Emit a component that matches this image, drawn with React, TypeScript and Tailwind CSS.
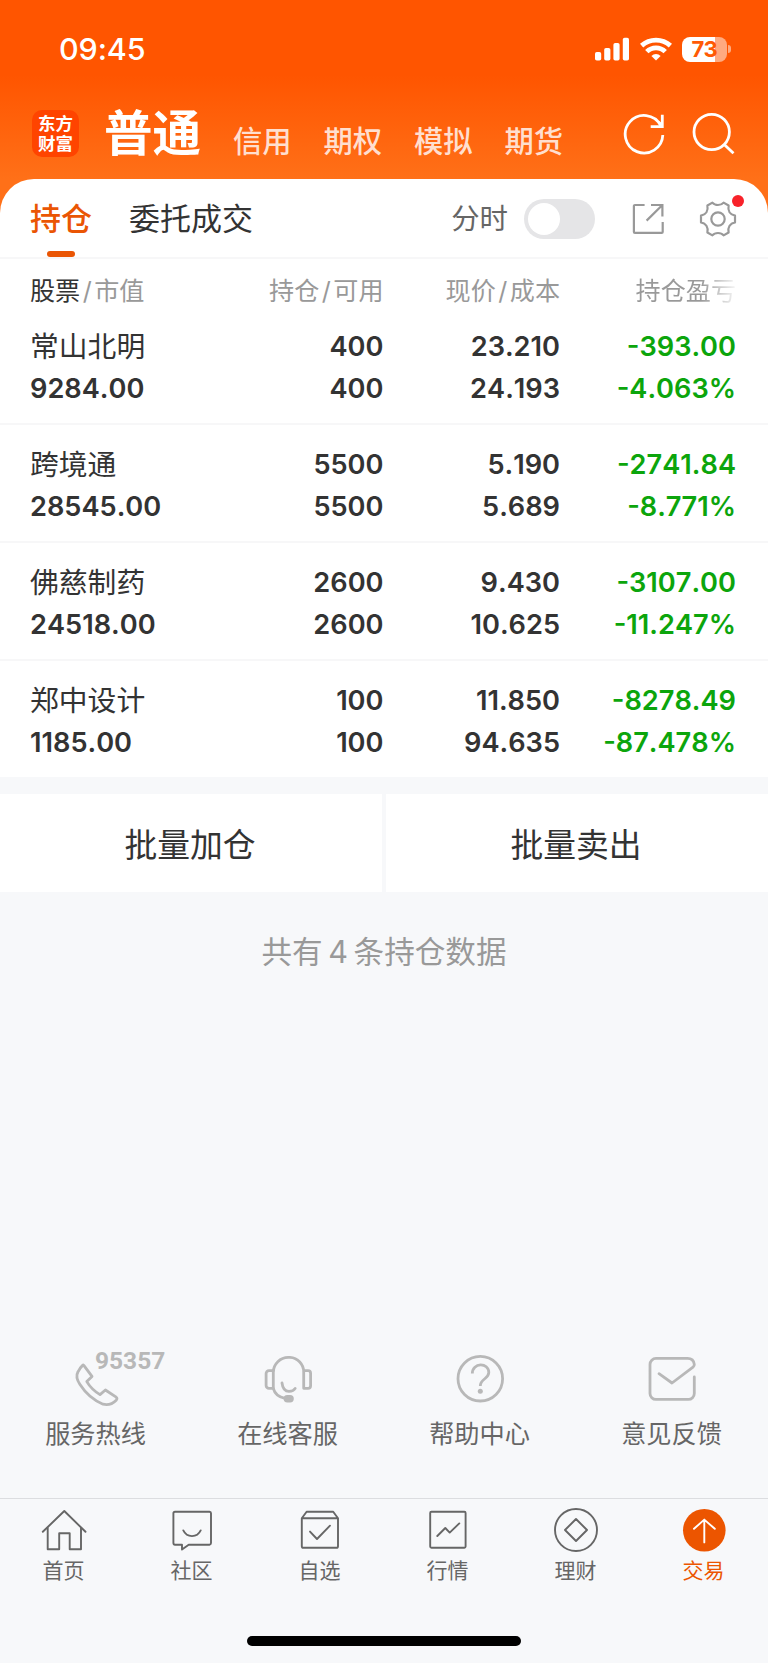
import type { ReactNode } from "react";

type Holding = {
  name: string;
  value: string;
  amount: string;
  available: string;
  price: string;
  cost: string;
  profit: string;
  ratio: string;
};

const holdings: Holding[] = [
  { name: "常山北明", value: "9284.00", amount: "400", available: "400", price: "23.210", cost: "24.193", profit: "-393.00", ratio: "-4.063%" },
  { name: "跨境通", value: "28545.00", amount: "5500", available: "5500", price: "5.190", cost: "5.689", profit: "-2741.84", ratio: "-8.771%" },
  { name: "佛慈制药", value: "24518.00", amount: "2600", available: "2600", price: "9.430", cost: "10.625", profit: "-3107.00", ratio: "-11.247%" },
  { name: "郑中设计", value: "1185.00", amount: "100", available: "100", price: "11.850", cost: "94.635", profit: "-8278.49", ratio: "-87.478%" },
];

const accounts = ["信用", "期权", "模拟", "期货"];

const services: { label: string; icon: ReactNode }[] = [
  {
    label: "服务热线",
    icon: (
      <path d="M11.8 10.4 20 21.4 14.8 26.6Q19.5 34.5 28 39.6L33.4 35 44.2 42.2Q45.6 43.4 44.2 45.2 38.5 51 31 49.2 17 43.6 8 29.6 3 22 6 16.8 8.2 12.6 10.6 10.4 11.2 9.8 11.8 10.4Z" />
    ),
  },
  {
    label: "在线客服",
    icon: (
      <>
        <path d="M9.3 33.3V17A15 15 0 0 1 24.3 2.4H26A14.5 14.5 0 0 1 39.7 17V33.3H44A2.6 2.6 0 0 0 46.6 30.7V18.3A2.6 2.6 0 0 0 44 15.7H39.7" />
        <path d="M9.3 15.7H5A2.9 2.9 0 0 0 2.1 18.6V30.4A2.9 2.9 0 0 0 5 33.3H9.3Q11.5 41.5 21 43.3" />
        <path d="M18 28Q19 36.4 25 36.4 29.5 36.4 31.2 33.4" />
        <rect x="21" y="41.4" width="7.4" height="4.6" rx="2.3" fill="#b8b8b8" />
      </>
    ),
  },
  {
    label: "帮助中心",
    icon: (
      <>
        <circle cx="24.3" cy="23.7" r="22.3" />
        <path d="M16.3 18.6C16.3 7.2 32.8 7.2 32.8 17.6 32.8 24 24.3 23.6 24.3 31" strokeLinecap="butt" />
        <circle cx="24.3" cy="36.2" r="2.5" fill="#b8b8b8" stroke="none" />
      </>
    ),
  },
  {
    label: "意见反馈",
    icon: (
      <path d="M46.3 22V38.4A6 6 0 0 1 40.3 44.4H8A6 6 0 0 1 2 38.4V9.4A6 6 0 0 1 8 3.4H39.5Q45.6 3.4 46.3 9.4 46.4 11 45 12.2L24 28 11 18.7" />
    ),
  },
];

const navItems: { label: string; icon: ReactNode }[] = [
  {
    label: "首页",
    icon: (
      <>
        <path d="M2.8 24.8 24.3 4 45.5 24.8" />
        <path d="M7.7 21V42.3H19.2V26.3H29.7V42.3H41V21" />
      </>
    ),
  },
  {
    label: "社区",
    icon: (
      <>
        <path d="M7 4.7H41.5A1.6 1.6 0 0 1 43 6.3V36.1A1.6 1.6 0 0 1 41.5 37.7H20.7L14 42.6V37.7H7A1.6 1.6 0 0 1 5.4 36.1V6.3A1.6 1.6 0 0 1 7 4.7Z" />
        <path d="M15.3 23.4C19 31 29 31 32.7 23.4" />
      </>
    ),
  },
  {
    label: "自选",
    icon: (
      <>
        <path d="M5.8 11.3H42V39.2A1.6 1.6 0 0 1 40.4 40.8H7.4A1.6 1.6 0 0 1 5.8 39.2V11.3L10.6 4.7H37.2L42 11.3" />
        <path d="M14 24.6 21 32 34 18.7" />
      </>
    ),
  },
  {
    label: "行情",
    icon: (
      <>
        <rect x="6.2" y="4.7" width="35.4" height="36" rx="1.2" />
        <path d="M13.3 29 21.3 21 25.7 25.6 35.3 16.4" />
      </>
    ),
  },
  {
    label: "理财",
    icon: (
      <>
        <circle cx="24" cy="23" r="21" />
        <path d="M24 12 35 23 24 34 13 23Z" />
      </>
    ),
  },
  {
    label: "交易",
    icon: (
      <>
        <circle cx="24.3" cy="23.3" r="21.3" fill="#ec5500" stroke="none" />
        <path d="M24.3 13V35.4M14 21.8 24.3 12.6 34.8 21.8" stroke="#fff" />
      </>
    ),
  },
];

function StatusBar() {
  return (
    <div className="flex h-[98px] items-center justify-between pl-[59px] pr-[37px] text-white">
      <span className="text-[30.5px] font-medium tracking-[-0.1px]">09:45</span>
      <div className="flex items-center">
        <svg width="34" height="24" fill="#fff">
          <rect x="0" y="15" width="6.2" height="8.5" rx="1.8" />
          <rect x="9.2" y="11" width="6.2" height="12.5" rx="1.8" />
          <rect x="18.4" y="6" width="6.2" height="17.5" rx="1.8" />
          <rect x="27.8" y="0.8" width="6.2" height="22.7" rx="1.8" />
        </svg>
        <svg className="ml-[11px]" width="32" height="24" viewBox="0 0 32 24" fill="none" stroke="#fff" strokeWidth="4.8">
          <path d="M1.6 8.6A21.5 21.5 0 0 1 30.4 8.6" />
          <path d="M6.8 14.6A13 13 0 0 1 25.2 14.6" />
          <path d="M16 23.6 11.4 18.9A6.6 6.6 0 0 1 20.6 18.9Z" fill="#fff" stroke="none" />
        </svg>
        <div className="ml-2.5 flex h-[25px] w-[45px] items-center justify-center rounded-[8px] bg-[linear-gradient(to_right,#fff_33px,#ffaa80_33px)]">
          <span className="text-[22px] font-bold leading-none tracking-[-0.3px] text-[#ff5a05]">73</span>
        </div>
        <div className="ml-px h-2 w-[3px] rounded-r-full bg-[#ffaa80]" />
      </div>
    </div>
  );
}

function AccountBar() {
  return (
    <div className="flex h-[81px] pl-8 pr-[33px] text-white">
      <div className="mt-3 flex h-[47px] w-[47px] flex-col items-center justify-center rounded-[10px] bg-[#ff4400] text-[17.5px] font-bold leading-[19.5px]">
        <span>东方</span>
        <span>财富</span>
      </div>
      <h1 className="ml-[25px] mt-[6px] text-[48.5px] font-bold leading-[60px]">普通</h1>
      <div className="ml-[32px] mt-6 flex gap-8 text-[29.3px] font-medium leading-[40px] text-[#ffdfcf]">
        {accounts.map((a) => (
          <span key={a} className="w-[58.5px] whitespace-nowrap">{a}</span>
        ))}
      </div>
      <svg className="ml-auto mt-3.5" width="44" height="44" viewBox="0 0 44 44" fill="none" stroke="#fff" strokeWidth="2.8">
        <path d="M40.8 23A18.8 18.8 0 1 1 38.6 13.4" />
        <path d="M40.3 2.8V14.6H28.7M36.6 10 40.3 14.6" />
      </svg>
      <svg className="ml-[25px] mt-3.5" width="44" height="44" viewBox="0 0 44 44" fill="none" stroke="#fff" strokeWidth="2.8">
        <circle cx="20.7" cy="20" r="17.7" />
        <path d="M33.2 32.4 42.5 41.2" />
      </svg>
    </div>
  );
}

function TabBar() {
  return (
    <div className="flex h-[80px] items-center border-b-2 border-[#f7f7f8] pl-[30px] pr-[31px] pt-[3px]">
      <div className="relative flex h-full items-center text-[31px] font-medium text-[#ea5504]">
        持仓
        <div className="absolute bottom-0 left-[17px] h-[6px] w-7 rounded-[3px] bg-[#ea5504]" />
      </div>
      <span className="ml-[37px] text-[31px] text-[#333]">委托成交</span>
      <span className="ml-auto text-[28.4px] text-[#666]">分时</span>
      <div className="mb-[2px] ml-4 flex h-10 w-[71px] items-center rounded-full bg-[#e5e5e7] pl-[3.5px]">
        <div className="h-8 w-8 rounded-full bg-white" />
      </div>
      <svg className="mb-[2px] ml-[37px]" width="32" height="32" viewBox="0 0 32 32" fill="none" stroke="#999" strokeWidth="2.2">
        <path d="M12.6 2H2.9A1 1 0 0 0 1.9 3V28.9A1 1 0 0 0 2.9 29.9H29.7A1 1 0 0 0 30.7 28.9V19" />
        <path d="M19 2H30.4V13.4M30.4 2 14.6 17.6" />
      </svg>
      <div className="relative mb-[2px] ml-[35px]">
        <svg width="38" height="38" viewBox="0 0 38 38" fill="none" stroke="#999" strokeWidth="2.2" strokeLinejoin="round">
          <circle cx="19" cy="19" r="6.7" />
          <path d="M13.4 2.6C16 5.8 22 5.8 24.6 2.6L29.6 5.5C28.6 10.8 31 14.6 36 15.6V22.4C31 23.4 28.6 27.2 29.6 32.5L24.6 35.4C22 32.2 16 32.2 13.4 35.4L8.4 32.5C9.4 27.2 7 23.4 2 22.4V15.6C7 14.6 9.4 10.8 8.4 5.5Z" />
        </svg>
        <div className="absolute -top-[5px] right-[-7px] h-3 w-3 rounded-full bg-[#f8222a]" />
      </div>
    </div>
  );
}

function HoldingRow({ item }: { item: Holding }) {
  return (
    <div className="grid h-[118px] grid-cols-[353.5px_176.5px_176px] border-b-2 border-[#f7f7f8] pl-[30px] pt-[18.5px] text-[27.2px] font-semibold leading-[42.8px] text-[#333] [font-kerning:none] last:border-b-0">
      <div className="flex justify-between">
        <div>
          <div className="text-[28.8px] font-normal">{item.name}</div>
          <div>{item.value}</div>
        </div>
        <div className="text-right">
          <div>{item.amount}</div>
          <div>{item.available}</div>
        </div>
      </div>
      <div className="text-right">
        <div>{item.price}</div>
        <div>{item.cost}</div>
      </div>
      <div className="text-right text-[#0ca50c]">
        <div>{item.profit}</div>
        <div>{item.ratio}</div>
      </div>
    </div>
  );
}

function Slash() {
  return <span className="mx-[2.5px]">/</span>;
}

export default function App() {
  return (
    <div className="flex h-[1663px] w-[768px] flex-col overflow-hidden bg-[#f7f8fa] font-['Inter','Noto_Sans_CJK_SC',sans-serif]">
      <header className="bg-[linear-gradient(to_bottom,#ff5500_0px,#ff5500_75px,#ff7018_179px)]">
        <StatusBar />
        <AccountBar />
      </header>

      <div className="bg-[#ff7018]">
        <div className="rounded-t-[34px] bg-white">
          <TabBar />
        </div>
      </div>

      <section className="h-[518px] bg-white">
        <div className="grid h-[48px] grid-cols-[353.5px_176.5px_176px] pl-[30px] pt-[13.5px] text-[25.1px] leading-[36px] text-[#999]">
          <div className="flex justify-between">
            <span>
              <span className="text-[#333]">股票</span>
              <Slash />
              市值
            </span>
            <span>
              持仓
              <Slash />
              可用
            </span>
          </div>
          <span className="text-right">
            现价
            <Slash />
            成本
          </span>
          <span className="bg-[linear-gradient(to_right,#999_80%,#fff_102%)] bg-clip-text text-right text-transparent">
            持仓盈亏
          </span>
        </div>
        {holdings.map((item) => (
          <HoldingRow key={item.name} item={item} />
        ))}
      </section>

      <div className="mt-[17px] flex h-[98px] gap-1 text-[32.8px] text-[#333]">
        <button className="w-[382px] bg-white pr-0.5 pt-[5px]">批量加仓</button>
        <button className="w-[382px] bg-white pr-0.5 pt-[5px]">批量卖出</button>
      </div>

      <p className="mt-[37px] text-center text-[30.6px] leading-[46px] text-[#999] [word-spacing:-3px]">
        共有 4 条持仓数据
      </p>

      <div className="mt-auto grid h-[148px] grid-cols-4">
        {services.map((s, i) => (
          <div key={s.label} className="flex flex-col items-center">
            <div className="relative mt-[5px]">
              <svg width="48" height="54" viewBox="0 0 48 54" fill="none" stroke="#b8b8b8" strokeWidth="2.8" strokeLinecap="round" strokeLinejoin="round">
                {s.icon}
              </svg>
              {i === 0 && (
                <span className="absolute left-[23px] top-[-6px] font-['Roboto',sans-serif] text-[24.5px] font-bold leading-6 text-[#b8b8b8]">
                  95357
                </span>
              )}
            </div>
            <span className="mt-[7px] pr-px text-[25.2px] leading-9 text-[#666]">{s.label}</span>
          </div>
        ))}
      </div>

      <nav className="grid h-[165px] grid-cols-6 grid-rows-[136px_10px] border-t border-[#dcdde0]">
        {navItems.map((n) => (
          <div
            key={n.label}
            className={`flex flex-col items-center pt-2 text-[21px] ${
              n.label === "交易" ? "text-[#ec5500]" : "text-[#666]"
            }`}
          >
            <svg width="48" height="48" viewBox="0 0 48 48" fill="none" stroke="#666" strokeWidth="1.9" strokeLinecap="round" strokeLinejoin="round">
              {n.icon}
            </svg>
            <span className="pr-px leading-8">{n.label}</span>
          </div>
        ))}
        <div className="col-span-6 mx-auto mt-px h-[10px] w-[274px] rounded-full bg-black" />
      </nav>
    </div>
  );
}
